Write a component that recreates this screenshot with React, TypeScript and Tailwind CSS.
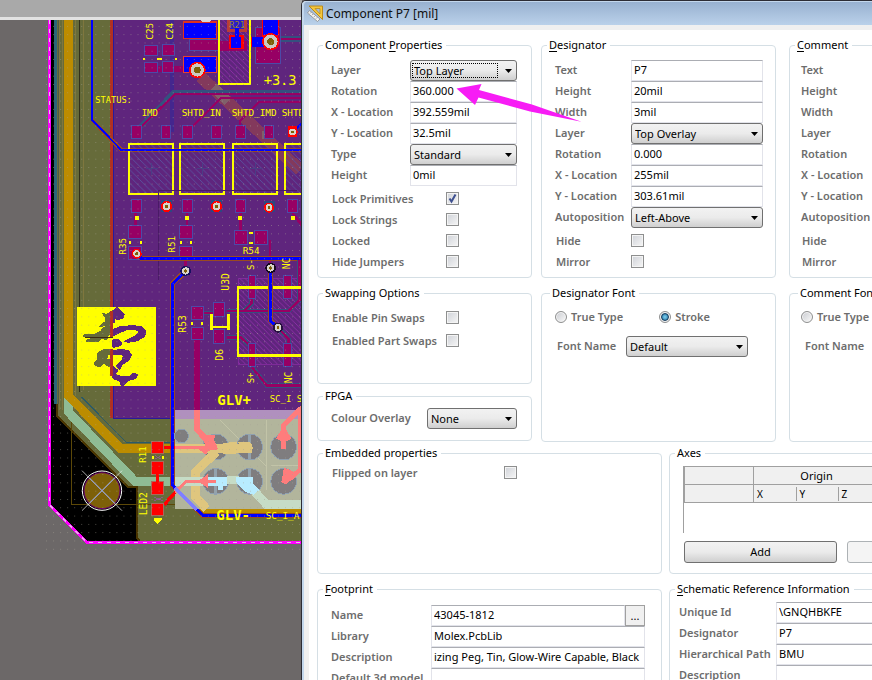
import { useId, type ReactNode } from "react";

/* ---------- Dialog building blocks ---------- */

const inputBase =
  "block h-[21px] w-full min-w-0 border border-[#e2e3ea] border-t-[#abadb3] bg-white px-[2px] pb-[2px] text-[11px] leading-4 text-black outline-none";

const labelText = "shrink-0 pb-[2px] font-semibold whitespace-nowrap text-[#6d6d6d]";

const buttonFace =
  "rounded-[3px] border border-[#707070] bg-linear-to-b from-[#f2f2f2] from-0% via-[#ebebeb] via-50% to-[#cfcfcf] to-100%";

function Group({ title, accel, className = "", children, legendClass = "-ml-[8px]" }: {
  title: string;
  accel?: number;
  className?: string;
  legendClass?: string;
  children?: ReactNode;
}) {
  return (
    <fieldset className={`min-w-0 rounded-[4px] border border-[#d5dfe5] ${className}`}>
      <legend className={`h-4 pr-1 pl-[2px] text-[11px] leading-4 whitespace-nowrap text-black ${legendClass}`}>
        {accel === undefined ? title : (
          <>
            {title.slice(0, accel)}
            <span className="underline underline-offset-2">{title[accel]}</span>
            {title.slice(accel + 1)}
          </>
        )}
      </legend>
      {children}
    </fieldset>
  );
}

function Select({ id, value, focused }: { id: string; value: string; focused?: boolean }) {
  return (
    <div className="relative w-full">
      <select id={id} defaultValue={value} className={`block h-[21px] w-full appearance-none pr-5 pl-[3px] text-[11px] leading-[19px] text-black outline-none ${buttonFace}`}>
        <option>{value}</option>
      </select>
      {focused && <span className="pointer-events-none absolute inset-y-[3px] right-[19px] left-[2px] border border-dotted border-black" />}
      <svg className="pointer-events-none absolute top-[9px] right-[5px]" width="7" height="4" viewBox="0 0 7 4">
        <path d="M0 0H7L3.5 4Z" fill="#000" />
      </svg>
    </div>
  );
}

function Field({ label, value, kind = "text", labelWidth, focused }: {
  label: string;
  value: string;
  kind?: "text" | "select";
  labelWidth: string;
  focused?: boolean;
}) {
  const id = useId();
  return (
    <div className="flex h-[21px] items-center">
      <label htmlFor={id} className={`${labelText} ${labelWidth}`}>{label}</label>
      {kind === "select"
        ? <Select id={id} value={value} focused={focused} />
        : <input id={id} type="text" defaultValue={value} className={inputBase} />}
    </div>
  );
}

function Check({ label, checked, labelWidth, row = "h-[21px]" }: {
  label: string;
  checked?: boolean;
  labelWidth: string;
  row?: string;
}) {
  const id = useId();
  return (
    <div className={`flex items-center ${row}`}>
      <label htmlFor={id} className={`pl-px ${labelText} ${labelWidth}`}>{label}</label>
      <span className="relative -mt-[2px] block size-[13px]">
        <input id={id} type="checkbox" defaultChecked={checked} className="peer block size-[13px] appearance-none border border-[#8e8f8f] bg-linear-to-br from-[#cfd2d8] to-[#f6f6f6] shadow-[inset_0_0_0_1px_#f4f4f4]" />
        <svg className="pointer-events-none absolute inset-0 hidden peer-checked:block" width="13" height="13" viewBox="0 0 13 13">
          <path d="M3.5 6.5L5.5 9.5L9.5 2.5" fill="none" stroke="#3f5190" strokeWidth="2" />
        </svg>
      </span>
    </div>
  );
}

function Radio({ label, name, checked }: { label: string; name: string; checked?: boolean }) {
  return (
    <label className="flex h-4 items-center gap-1 font-semibold whitespace-nowrap text-[#6d6d6d]">
      <span className="relative block size-3">
        <input type="radio" name={name} defaultChecked={checked} className="peer block size-3 appearance-none rounded-full border border-[#8e8f8f] bg-linear-to-br from-[#c9cbd0] to-[#fafafa] shadow-[inset_0_0_0_1px_#f4f4f4]" />
        <span className="pointer-events-none absolute inset-[2px] hidden rounded-full border border-[#123a5c] bg-radial from-[#7fd3f2] to-[#1b6fa0] peer-checked:block" />
      </span>
      {label}
    </label>
  );
}

function TextProps({ text, height, width, layer, rotation, x, y, auto }: Record<string, string>) {
  const w = "w-[76px]";
  return (
    <div className="pt-[7px]">
      <Field label="Text" value={text} labelWidth={w} />
      <Field label="Height" value={height} labelWidth={w} />
      <Field label="Width" value={width} labelWidth={w} />
      <Field label="Layer" value={layer} kind="select" labelWidth={w} />
      <Field label="Rotation" value={rotation} labelWidth={w} />
      <Field label="X - Location" value={x} labelWidth={w} />
      <Field label="Y - Location" value={y} labelWidth={w} />
      <Field label="Autoposition" value={auto} kind="select" labelWidth={w} />
      <div className="pt-[3px]">
        <Check label="Hide" labelWidth={w} />
        <Check label="Mirror" labelWidth={w} />
      </div>
    </div>
  );
}

function FontGroup({ title, name, className, legendClass, labelInset }: {
  title: string;
  name: string;
  className: string;
  legendClass: string;
  labelInset: string;
}) {
  const id = useId();
  return (
    <Group title={title} legendClass={legendClass} className={`mt-[7px] min-h-[157px] ${className}`}>
      <div className="flex gap-[36px] pt-2">
        <Radio label="True Type" name={name} />
        <Radio label="Stroke" name={name} checked />
      </div>
      <div className={`flex items-center pt-[11px] ${labelInset}`}>
        <label htmlFor={id} className={`w-[69px] ${labelText}`}>Font Name</label>
        <div className="w-[122px]"><Select id={id} value="Default" /></div>
      </div>
    </Group>
  );
}

/* ---------- Circuit board ---------- */

function Via({ x, y, ring = "#f00", r = 15 }: { x: number; y: number; ring?: string; r?: number }) {
  return (
    <g>
      <circle cx={x} cy={y} r={r} fill={ring} />
      <circle cx={x} cy={y} r={r * 0.68} fill="#d8d4cc" />
      <circle cx={x} cy={y} r={r * 0.3} fill="#7d6008" />
    </g>
  );
}

function Pads({ list, fill = "#970064", halo = "#4c4aa8" }: { list: number[][]; fill?: string; halo?: string }) {
  return (
    <>
      {list.map(([x, y, w, h], i) => (
        <rect key={i} x={x} y={y} width={w} height={h} fill={fill} stroke={halo} strokeWidth="3" />
      ))}
    </>
  );
}

function Board() {
  return (
    <svg width="302" height="660" viewBox="0 20 302 660" className="block shrink-0" shapeRendering="crispEdges" fontFamily='"DejaVu Sans Mono", monospace'>
      <defs>
        <pattern id="grid" width="7.03" height="8.3" patternUnits="userSpaceOnUse" x="4" y="1">
          <rect width="1" height="1" fill="#a8a496" />
        </pattern>
        <pattern id="hatch" width="20" height="20" patternUnits="userSpaceOnUse">
          <path d="M0 0L20 20" stroke="#5a4f9c" strokeWidth="2" />
        </pattern>
        <pattern id="hatchV" width="16" height="16" patternUnits="userSpaceOnUse">
          <path d="M0 0L16 16" stroke="#8e2fa8" strokeWidth="2" />
        </pattern>
      </defs>

      <rect x="0" y="20" width="302" height="660" fill="#6c6868" />
      <path d="M50 20V504L87 542H302V20Z" fill="#000" />
      {/* copper pours */}
      <path d="M54 20V400L57 404V416L128 487H137V538L140 541H302V20Z" fill="#666b3a" />
      <path d="M57 404V416L128 487H137V538L140 541" fill="none" stroke="#4a3500" strokeWidth="2" />
      <path d="M55.500 20V404" stroke="#2a6478" strokeWidth="3" />
      <path d="M59.500 20V410M62.500 20V410M75.500 20V396M83.500 20V390" stroke="#7f773e" />
      <path d="M58.500 20V404" stroke="#4d5a48" />
      <path d="M79.500 20V392" stroke="#33301a" strokeWidth="1" />
      <path d="M81.500 397L126 442H172" fill="none" stroke="#2b5a68" />
      <rect x="111" y="20" width="191" height="398" fill="#5f257d" />
      <rect x="110" y="20" width="3" height="398" fill="#b03024" />
      <path d="M113.500 20V418H172" fill="none" stroke="#281a9c" />
      <path d="M71.500 420V504.500H302" fill="none" stroke="#5c4808" />

      {/* wide traces */}
      <path d="M68.500 396V412L135 481.500H302" fill="none" stroke="#8fbc94" strokeWidth="9" />
      <path d="M68.500 20V396L120 448H302" fill="none" stroke="#bc8c00" strokeWidth="9" />
      <path d="M218 454L199 474V504L210 513H302" fill="none" stroke="#bc8c00" strokeWidth="8" />

      {/* upper components */}
      <g transform="scale(.33333)">
        <path d="M516 60V395" stroke="#44268e" strokeWidth="14" />
        <path d="M602 230L900 510" stroke="#83395c" strokeWidth="36" />
        <path d="M640 262L684 304" stroke="#80606a" strokeWidth="30" />
        <path d="M785 405H815" stroke="#80606a" strokeWidth="24" />
        <path d="M906 278H522L400 402" fill="none" stroke="#35507f" strokeWidth="16" />
        <path d="M906 283H524L410 394M906 294H664L564 394M906 306H776L720 362V395" fill="none" stroke="#970064" strokeWidth="7" />
        <path d="M440 207H560" stroke="#970064" strokeWidth="20" />
        <path d="M840 117H906" stroke="#35507f" strokeWidth="16" />
        <path d="M840 117H906" stroke="#970064" strokeWidth="6" />
        <Pads list={[[434, 136, 38, 32], [488, 134, 36, 34], [434, 187, 38, 32], [488, 185, 34, 34], [569, 120, 90, 32], [767, 82, 74, 110]]} />
        <rect x="657" y="60" width="94" height="192" fill="url(#hatchV)" />
        <rect x="548" y="62" width="102" height="56" fill="#e03020" />
        <rect x="553" y="69" width="94" height="45" fill="#00f" />
        <rect x="548" y="167" width="102" height="52" fill="#e84030" />
        <rect x="553" y="172" width="94" height="44" fill="#00f" />
        <rect x="682" y="60" width="58" height="36" fill="#b83c38" />
        <rect x="690" y="60" width="42" height="28" fill="#2a1ccc" />
        <path d="M660 137H740" stroke="#970064" strokeWidth="30" />
        <rect x="687" y="106" width="46" height="40" fill="#f00" />
        <path d="M711 85V145" stroke="#00f" strokeWidth="14" />
        <rect x="694" y="110" width="30" height="34" fill="#00f" />
        <path d="M786 60H838V92L828 142H746V112H786Z" fill="#f00" />
        <path d="M790 60H833V104H790Z" fill="#00f" />
        <rect x="755" y="110" width="44" height="32" fill="#00f" />
        <circle cx="812" cy="125" r="26" fill="#f00" />
        <circle cx="812" cy="125" r="21" fill="#ccc8c2" />
        <circle cx="812" cy="125" r="10" fill="#7d6008" />
        <circle cx="592" cy="210" r="25" fill="#f00" />
        <circle cx="592" cy="210" r="20" fill="#ccc8c2" />
        <circle cx="592" cy="210" r="10" fill="#7d6008" />
        <path d="M603 60H633L628 67H608Z" fill="#d8d8d8" />
        <rect x="658" y="40" width="93" height="212" fill="none" stroke="#ff0" strokeWidth="6" />
        <path d="M428 177H436M472 177H486M524 177H532" stroke="#ff0" strokeWidth="6" />
        <Pads list={[[394, 377, 32, 38], [484, 377, 28, 38], [548, 377, 30, 38], [636, 377, 28, 38], [706, 377, 30, 38], [794, 377, 28, 38]]} />
        <path d="M880 395L906 368" stroke="#00f" strokeWidth="7" />
        <rect x="864" y="378" width="28" height="34" fill="#f00" />
        <Via x={878} y={396} />
        <g fill="#ff0">
          <text x="286" y="308" fontSize="26">STATUS:</text>
          <text x="425" y="348" fontSize="27">IMD</text>
          <text x="545" y="348" fontSize="28">SHTD_IN</text>
          <text x="695" y="348" fontSize="28">SHTD_IMD</text>
          <text x="845" y="348" fontSize="28">SHTD</text>
          <text x="791" y="254" fontSize="41">+3.3</text>
          <text transform="translate(460 119) rotate(-90)" fontSize="28">C25</text>
          <text transform="translate(520 119) rotate(-90)" fontSize="28">C24</text>
        </g>
        <text x="688" y="84" fontSize="26" fill="#98842a">R21</text>
      </g>

      {/* LED row and resistors */}
      <g transform="translate(40 120) scale(.33333)">
        <path d="M156 0L244 90H786" fill="none" stroke="#9a4a20" strokeWidth="12" />
        <path d="M156 -300V0L244 90H786" fill="none" stroke="#00f" strokeWidth="6" />
        {[[267, 132], [420, 132], [579, 132], [736, 132]].map(([x, w]) => (
          <g key={x}>
            <rect x={x} y="73" width={w} height="148" fill="url(#hatch)" />
            <path d={`M${x + 50} 147h36M${x + 68} 130v34`} stroke="#4b3d84" strokeWidth="3" />
            <rect x={x} y="73" width={w} height="148" fill="none" stroke="#ff0" strokeWidth="6" />
          </g>
        ))}
        <path d="M244 90H786" fill="none" stroke="#00f" strokeWidth="6" />
        <path d="M355 480V212H770" fill="none" stroke="#4a1a66" strokeWidth="3" />
        <path d="M287 270V330M441 270V330M601 270V340M437 400V450M690 360V450M758 280L786 316" stroke="#970064" strokeWidth="8" />
        <Pads list={[[275, 239, 30, 38], [427, 239, 30, 38], [586, 239, 30, 38], [744, 239, 30, 38], [266, 317, 40, 40], [266, 380, 40, 40], [419, 317, 38, 40], [419, 380, 38, 30], [584, 332, 38, 42], [644, 332, 38, 42]]} />
        <path d="M290 400L304 415H786" fill="none" stroke="#9a4a20" strokeWidth="16" />
        <path d="M290 400L304 415H786" fill="none" stroke="#00f" strokeWidth="9" />
        <rect x="364" y="241" width="32" height="34" fill="#2d4880" />
        <rect x="514" y="241" width="32" height="34" fill="#2d4880" />
        <rect x="672" y="243" width="32" height="34" fill="#2d4880" />
        <Via x={380} y={259} r={17} />
        <Via x={530} y={259} r={17} />
        <Via x={687} y={263} />
        <Via x={290} y={401} />
        <path d="M285 289h12v10h-12zM436 289h12v10h-12zM595 289h12v10h-12zM753 289h12v10h-12zM267 364h6v7h-6zM299 364h6v7h-6zM420 364h6v7h-6zM450 364h6v7h-6zM627 335h12v6h-12zM627 366h12v6h-12z" fill="#ff0" />
        <g fill="#ff0" fontSize="28">
          <text transform="translate(257 404) rotate(-90)">R35</text>
          <text transform="translate(404 398) rotate(-90)">R51</text>
          <text x="608" y="401">R54</text>
        </g>
      </g>

      {/* driver IC, diode and logo */}
      <g transform="translate(40 260) scale(.33333)">
        <rect x="595" y="55" width="191" height="258" fill="url(#hatchV)" stroke="#8e2fa8" strokeWidth="2" />
        <path d="M490 159H540M560 153H745L786 112M635 110V130L612 153M560 232H602L636 262M636 322L680 376H786M714 203L745 236V260M778 0V120" fill="none" stroke="#35507f" strokeWidth="14" />
        <path d="M490 159H540M560 153H745L786 112M635 110V130L612 153M560 232H602L636 262M636 322L680 376H786M714 203L745 236V260M778 0V120" fill="none" stroke="#970064" strokeWidth="8" />
        <path d="M471 230V490" stroke="#970064" strokeWidth="18" />
        <Pads list={[[454, 141, 36, 38], [454, 202, 36, 38], [521, 129, 34, 40], [521, 210, 34, 40], [625, 48, 22, 68], [732, 48, 22, 68], [625, 252, 22, 68], [732, 252, 22, 68]]} />
        <path d="M786 83H594V287H786" fill="none" stroke="#ff0" strokeWidth="8" />
        <path d="M515 162V210M565 162V210M515 201H565" stroke="#ff0" strokeWidth="8" />
        <path d="M453 186h7v8h-7zM482 186h7v8h-7z" fill="#ff0" />
        <path d="M436 34L398 71V676L490 768H786" fill="none" stroke="#9a4a20" strokeWidth="15" />
        <path d="M436 34L398 71V676L490 768H786" fill="none" stroke="#00f" strokeWidth="9" />
        <path d="M691 25V182L714 203" fill="none" stroke="#9a4a20" strokeWidth="15" />
        <path d="M691 25V182L714 203" fill="none" stroke="#00f" strokeWidth="9" />
        <Via x={437} y={33} ring="#181060" r={16} />
        <Via x={692} y={24} ring="#140820" r={16} />
        <Via x={714} y={203} ring="#281040" r={15} />
        <g fill="#ff0" fontSize="27">
          <text transform="translate(437 218) rotate(-90)" fontSize="29">R53</text>
          <text transform="translate(566 92) rotate(-90)" fontSize="29">U3D</text>
          <text transform="translate(550 302) rotate(-90)" fontSize="29">D6</text>
          <text transform="translate(641 30) rotate(-90)">S-</text>
          <text transform="translate(749 28) rotate(-90)" fontSize="29">NC</text>
          <text transform="translate(641 370) rotate(-90)">S+</text>
          <text transform="translate(755 370) rotate(-90)" fontSize="29">NC</text>
        </g>
      </g>
      <g transform="translate(72 302) scale(.33333)">
        <rect x="15" y="15" width="237" height="237" fill="#ff0" />
        <path d="M91 35L104 37L123 26V100L110 96L105 112L88 110L78 120L44 119V113L62 109L36 104L35 99H62L84 89L93 79L106 70L82 74L86 68L99 60L101 47Z M78 152L96 142L123 142V155L109 158L103 172L112 173L123 170V194L108 193L96 184L82 195L68 190L67 183L78 171Z" fill="#666b3a" stroke="#666b3a" strokeWidth="3" />
        <path d="M123 26L135 15L143 22L157 36L154 47L140 53L126 49L128 62H123Z M123 82L145 74L181 71L211 74L222 89L218 103L197 116L170 121L157 118L185 104L200 93L198 85L172 81L146 90L123 102Z M123 113L141 113L150 124L145 131L126 136H123Z M123 146L150 142L171 147L178 159L171 174L151 188L142 203L132 193L150 173L155 160L136 156L123 159Z M123 192L138 205L129 217L150 224L174 222L184 213L198 219L190 230L170 235L158 248L148 252L145 239L123 229Z" fill="#5f257d" stroke="#5f257d" strokeWidth="3" />
        <path d="M115 26h8v80h-8zM115 142h8v80h-8z" fill="#b03024" />
        <path d="M40 108H123" stroke="#3c2a10" strokeWidth="3" />
      </g>

      {/* lower left connector area */}
      <g transform="translate(40 390) scale(.33333)">
        <rect x="405" y="60" width="381" height="297" fill="#b2b59c" />
        <path d="M405 60H786V87H405Z" fill="#b090be" />
        <path d="M540 90L680 230M680 90V300M692 226H786" stroke="#c2c4a8" strokeWidth="3" />
        <g fill="#7f7d7f" stroke="#8ea0b0" strokeWidth="3">
          <circle cx="424" cy="138" r="21" />
          <circle cx="527" cy="171" r="39" />
          <circle cx="629" cy="171" r="39" />
          <circle cx="731" cy="171" r="39" />
          <circle cx="527" cy="274" r="39" />
          <circle cx="629" cy="274" r="39" />
          <circle cx="731" cy="274" r="39" />
        </g>
        <path d="M527 235V313M629 132V210M629 235V313" stroke="#92a2ae" strokeWidth="10" />
        <path d="M405 175H636" stroke="#dfc67e" strokeWidth="26" />
        <path d="M530 185L467 245V320L500 357" fill="none" stroke="#dfc67e" strokeWidth="26" />
        <path d="M540 162L590 154L600 190L550 192ZM595 155H630L640 175L625 190H600Z" fill="#dfc67e" />
        <path d="M405 274H490" stroke="#c6dcc6" strokeWidth="26" />
        <path d="M560 270H596" stroke="#c6dcc6" strokeWidth="22" />
        <path d="M502 260H562V288H548V300H534V288H502Z" fill="#b8ecff" />
        <path d="M640 300L680 344H786" fill="none" stroke="#c6dcc6" strokeWidth="26" />
        <path d="M589 262H640V280L658 300L640 314L618 306L589 280Z" fill="#b8ecff" />
        <path d="M471 60V118L500 150" fill="none" stroke="#ff7c7c" strokeWidth="18" />
        <path d="M372 172H405" stroke="#f00" strokeWidth="9" />
        <path d="M405 172H500" stroke="#ff7c7c" strokeWidth="9" />
        <path d="M475 112L502 136L526 136L522 150L535 178L505 182L498 194L476 178L496 166Z" fill="#ff7c7c" />
        <path d="M731 178V106L786 52" fill="none" stroke="#ff7c7c" strokeWidth="14" />
        <path d="M731 106L754 146L738 154V178H724V154L708 146Z" fill="#ff7c7c" />
        <path d="M780 60V240L734 276" fill="none" stroke="#ff7c7c" strokeWidth="14" />
        <path d="M724 276L732 232L770 250L766 264L734 282Z" fill="#ff7c7c" />
        <path d="M372 345L408 304" stroke="#f00" strokeWidth="10" />
        <path d="M405 306L438 274H528" fill="none" stroke="#ff7c7c" strokeWidth="9" />
        <path d="M474 274L504 252V294Z" fill="#ff7c7c" />
        <path d="M398 -180V286L408 298" fill="none" stroke="#00f" strokeWidth="9" />
        <path d="M405 294L470 359" stroke="#7f7fff" strokeWidth="9" />

        <Pads fill="#f00" halo="#a86a5a" list={[[336, 154, 36, 38], [336, 216, 36, 38], [336, 276, 36, 38], [336, 340, 36, 38]]} />
        <path d="M354 250V280" stroke="#f00" strokeWidth="9" />
        <path d="M336 198h6v9h-6zM366 198h6v9h-6zM343 384H365V390L354 402L343 392Z" fill="#ff0" />
        <path d="M344 196L364 208M344 208L364 196M342 322L368 332M342 332L368 322" stroke="#8a5a8a" strokeWidth="3" />
        <g fill="#ff0">
          <text x="532" y="44" fontSize="42" fontWeight="bold">GLV+</text>
          <text x="529" y="389" fontSize="42" fontWeight="bold">GLV-</text>
          <text x="689" y="36" fontSize="27">SC_I S</text>
          <text x="677" y="387" fontSize="28">SC_I_A</text>
          <text transform="translate(317 218) rotate(-90)" fontSize="27">R11</text>
          <text transform="translate(321 376) rotate(-90)" fontSize="29">LED2</text>
        </g>
        <g shapeRendering="auto">
          <circle cx="186" cy="302" r="54" fill="#7d6008" stroke="#700070" strokeWidth="3" />
          <circle cx="186" cy="302" r="59" fill="none" stroke="#fff" strokeWidth="3" />
          <path d="M126 242L246 362M126 362L246 242" stroke="#fff" strokeWidth="2" />
          <path d="M148 264L224 340M148 340L224 264" stroke="#8095e0" strokeWidth="3" />
        </g>
      </g>

      <rect x="40" y="20" width="262" height="530" fill="url(#grid)" fillOpacity=".55" />
      <path d="M49.500 20V505L87 542.500H302" fill="none" stroke="#f0f" strokeWidth="3" />
      <path d="M49.500 20V505L87 542.500H302" fill="none" stroke="#e8c0e8" strokeWidth="1" strokeDasharray="4 5" />
    </svg>
  );
}

/* ---------- Window ---------- */

function TitleBar() {
  return (
    <header className="flex h-[23px] items-center gap-[2px] bg-linear-to-b from-[#98b1d0] to-[#bad1ea] pl-[3px]">
      <svg width="17" height="17" viewBox="0 0 17 17" aria-hidden="true">
        <path d="M2 1H15.500V14.500Z" fill="#f4c63c" stroke="#b98a1c" />
        <path d="M8 3.500H13V9Z" fill="#a6bedb" stroke="#b98a1c" strokeWidth=".8" />
        <path d="M2.500 5.500L13 14L10.500 16.500L.5 8Z" fill="#f2f2f2" stroke="#8c8c8c" strokeWidth=".8" />
        <path d="M3 8.500L4.200 7.300M5 10.200L6.200 9M7 11.900L8.200 10.700M9 13.600L10.200 12.400" stroke="#777" strokeWidth=".7" />
      </svg>
      <h1 className="text-[12px] leading-5 whitespace-nowrap text-[#101010]">Component P7 [mil]</h1>
    </header>
  );
}

function AxesTable() {
  const head = "border border-[#a0a0a0] bg-[#f0f0f0] p-0 font-normal";
  const sub = "border-y border-[#a0a0a0] bg-[#f0f0f0] p-0 font-normal";
  return (
    <div className="min-h-[67px] border-l border-[#a0a0a0]">
      <table className="w-full table-fixed border-collapse text-[11px] leading-4">
        <colgroup>
          <col className="w-[69px]" /><col className="w-[42px]" /><col className="w-[42px]" /><col className="w-[42px]" /><col />
        </colgroup>
        <thead>
          <tr className="h-[18px]">
            <th className={head} />
            <th className={head} colSpan={3}>Origin</th>
            <th className={head} />
          </tr>
          <tr className="h-[18px] text-left text-[10px]">
            <th className={head} />
            {["X", "Y", "Z"].map((a) => (
              <th key={a} className={sub}>
                <span className={`block pl-[3px] leading-[14px] ${a === "X" ? "" : "border-l border-[#a0a0a0]"}`}>{a}</span>
              </th>
            ))}
            <th className={sub} />
          </tr>
        </thead>
        <tbody />
      </table>
    </div>
  );
}

export default function App() {
  const nameId = useId();
  return (
    <main className="relative flex h-screen overflow-hidden bg-[#6c6868] font-['Noto_Sans','Open_Sans',sans-serif] text-[11px] leading-4">
      <section aria-label="PCB editor" className="flex w-[302px] shrink-0 flex-col">
        <div className="h-[17px] shrink-0 bg-[#a9a9a9]" />
        <div className="h-[3px] shrink-0 bg-[#e2e2e2]" />
        <Board />
      </section>

      <section role="dialog" aria-label="Component P7 [mil]" className="-ml-px flex min-w-0 flex-1 flex-col overflow-hidden rounded-tl-[5px] border-t border-l border-[#2c2c34] bg-[#f0f0f0]">
        <div className="flex min-h-0 flex-1 flex-col overflow-hidden rounded-tl-[4px] border-t border-l-2 border-[#c3d7ec]">
          <TitleBar />
          <div className="mt-[5px] ml-[5px] min-h-0 flex-1 overflow-hidden bg-white pt-[7px] pl-[8px]">
            <div className="flex">
              <div className="flex w-[215px] shrink-0 flex-col">
                <Group title="Component Properties" accel={10} className="pr-[14px] pb-1 pl-[13px]">
                  <div className="pt-[7px]">
                    <Field label="Layer" value="Top Layer" kind="select" focused labelWidth="w-[79px]" />
                    <Field label="Rotation" value="360.000" labelWidth="w-[79px]" />
                    <Field label="X - Location" value="392.559mil" labelWidth="w-[79px]" />
                    <Field label="Y - Location" value="32.5mil" labelWidth="w-[79px]" />
                    <Field label="Type" value="Standard" kind="select" labelWidth="w-[79px]" />
                    <Field label="Height" value="0mil" labelWidth="w-[79px]" />
                  </div>
                  <div className="pt-[3px]">
                    <Check label="Lock Primitives" checked labelWidth="w-[115px]" />
                    <Check label="Lock Strings" labelWidth="w-[115px]" />
                    <Check label="Locked" labelWidth="w-[115px]" />
                    <Check label="Hide Jumpers" labelWidth="w-[115px]" />
                  </div>
                </Group>
                <Group title="Swapping Options" className="mt-[7px] min-h-[99px] pl-[13px]">
                  <div className="pt-[6px]">
                    <Check label="Enable Pin Swaps" labelWidth="w-[115px]" row="h-[23px]" />
                    <Check label="Enabled Part Swaps" labelWidth="w-[115px]" row="h-[23px]" />
                  </div>
                </Group>
                <Group title="FPGA" className="mt-1 pr-[14px] pb-[11px] pl-[13px]">
                  <div className="pt-1">
                    <Field label="Colour Overlay" value="None" kind="select" labelWidth="w-[96px]" />
                  </div>
                </Group>
              </div>

              <div className="ml-[9px] flex w-[235px] shrink-0 flex-col">
                <Group title="Designator" accel={0} className="pr-[12px] pb-1 pl-[13px]">
                  <TextProps text="P7" height="20mil" width="3mil" layer="Top Overlay" rotation="0.000" x="255mil" y="303.61mil" auto="Left-Above" />
                </Group>
                <FontGroup title="Designator Font" name="designator-font" className="px-[13px]" legendClass="-ml-[5px]" labelInset="pl-[2px]" />
              </div>

              <div className="ml-[13px] flex min-w-[235px] flex-1 flex-col">
                <Group title="Comment" accel={0} className="pr-[12px] pb-1 pl-[11px]" legendClass="-ml-[6px]">
                  <TextProps text="" height="60mil" width="10mil" layer="Top Overlay" rotation="0.000" x="0mil" y="0mil" auto="Left-Below" />
                </Group>
                <FontGroup title="Comment Font" name="comment-font" className="px-[11px]" legendClass="-ml-[3px]" labelInset="pl-[4px]" />
              </div>
            </div>

            <div className="mt-[3px] flex">
              <div className="flex w-[345px] shrink-0 flex-col">
                <Group title="Embedded properties" className="min-h-[129px] pl-[13px]">
                  <div className="pt-[2px]">
                    <Check label="Flipped on layer" labelWidth="w-[173px]" />
                  </div>
                </Group>
                <Group title="Footprint" accel={0} className="mt-[7px] min-h-[129px] pr-[16px] pl-[13px]">
                  <div className="pt-2">
                    <div className="flex h-[21px] items-center">
                      <label htmlFor={nameId} className={`w-[100px] ${labelText}`}>Name</label>
                      <input id={nameId} type="text" defaultValue="43045-1812" className={inputBase} />
                      <button type="button" aria-label="Browse" className="h-[21px] w-5 shrink-0 border border-[#a0a0a0] bg-[#f0f0f0] leading-4">...</button>
                    </div>
                    <Field label="Library" value="Molex.PcbLib" labelWidth="w-[100px]" />
                    <Field label="Description" value="izing Peg, Tin, Glow-Wire Capable, Black" labelWidth="w-[100px]" />
                    <Field label="Default 3d model" value="" labelWidth="w-[100px]" />
                  </div>
                </Group>
              </div>

              <div className="ml-[7px] flex min-w-[345px] flex-1 flex-col">
                <Group title="Axes" className="min-h-[129px] pr-2 pl-[13px]">
                  <div className="pt-[5px]">
                    <AxesTable />
                    <div className="flex gap-[10px] pt-2 pl-px">
                      <button type="button" className={`h-[22px] w-[153px] shrink-0 text-[11px] leading-5 ${buttonFace}`}>Add</button>
                      <button type="button" aria-label="Remove" disabled className="h-[22px] flex-1 rounded-[3px] border border-[#adb2b5] bg-[#f4f4f4]" />
                    </div>
                  </div>
                </Group>
                <Group title="Schematic Reference Information" accel={0} className="mt-[7px] min-h-[129px] pr-2 pl-[9px]" legendClass="-ml-[4px]">
                  <div className="pt-[5px]">
                    <Field label="Unique Id" value="\GNQHBKFE" labelWidth="w-[97px]" />
                    <Field label="Designator" value="P7" labelWidth="w-[97px]" />
                    <Field label="Hierarchical Path" value="BMU" labelWidth="w-[97px]" />
                    <Field label="Description" value="" labelWidth="w-[97px]" />
                  </div>
                </Group>
              </div>
            </div>
          </div>
        </div>
      </section>

      {/* callout arrow pointing at the rotation value */}
      <svg className="pointer-events-none absolute top-[80px] left-[452px]" width="134" height="46" viewBox="452 80 134 46" aria-hidden="true">
        <path d="M456.500 88.500L481.500 84L479 90L532 104.500L581.500 121.700L530 111.500L478.500 97.500L475 105Z" fill="#f71cf5" />
      </svg>
    </main>
  );
}
